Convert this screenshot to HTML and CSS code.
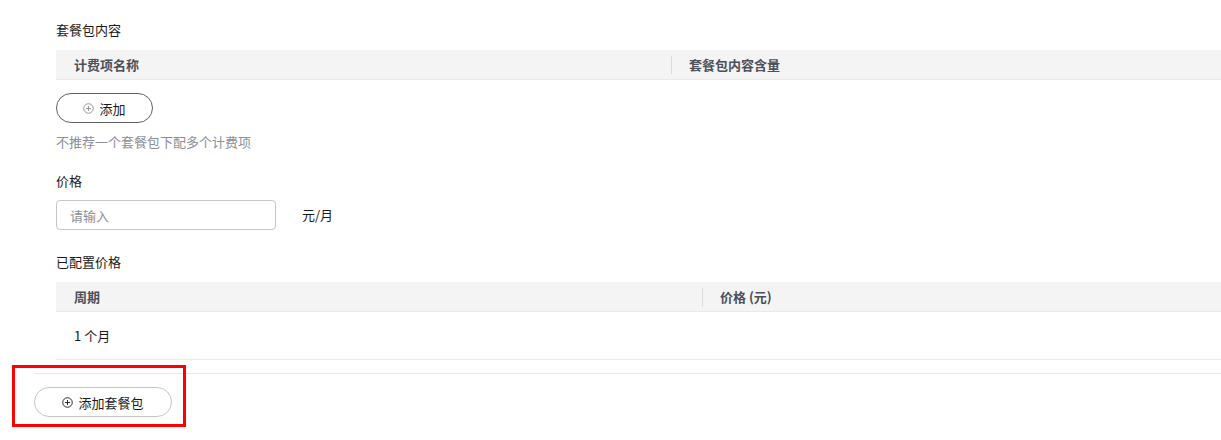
FILE: index.html
```html
<!DOCTYPE html>
<html lang="zh-CN">
<head>
  <meta charset="UTF-8">
  <title>套餐包</title>
  <link rel="stylesheet" href="styles.css">
</head>
<body>
  <div class="form">
    <div class="label">套餐包内容</div>
    <div class="grid grid-items">
      <div class="grid-head">
        <div class="cell">计费项名称</div>
        <div class="cell sep">套餐包内容含量</div>
      </div>
    </div>
    <button class="btn btn-dark">
      <svg class="plus" viewBox="0 0 12 12"><circle cx="6" cy="6" r="5.2"/><path d="M6 3.2v5.6M3.2 6h5.6"/></svg>
      添加
    </button>
    <div class="hint">不推荐一个套餐包下配多个计费项</div>

    <div class="label label-gap">价格</div>
    <div class="price-row">
      <input class="input" type="text" placeholder="请输入">
      <span class="unit">元/月</span>
    </div>

    <div class="label label-gap2">已配置价格</div>
    <div class="grid grid-prices">
      <div class="grid-head">
        <div class="cell">周期</div>
        <div class="cell sep">价格 (元)</div>
      </div>
      <div class="grid-row">
        <div class="cell">1 个月</div>
        <div class="cell"></div>
      </div>
    </div>
  </div>

  <div class="footer">
    <div class="mark">
      <button class="btn btn-light">
        <svg class="plus" viewBox="0 0 12 12"><circle cx="6" cy="6" r="5.2"/><path d="M6 3.2v5.6M3.2 6h5.6"/></svg>
        添加套餐包
      </button>
    </div>
  </div>
</body>
</html>
```

FILE: styles.css
```css
body {
  margin: 0;
  background: #fff;
  color: #191919;
  font-family: "Noto Sans CJK SC", "Noto Sans", sans-serif;
  font-size: 13px;
  line-height: 18px;
}
.form {
  padding: 21px 0 0 56px;
}
.label {
  margin-bottom: 11px;
}
.label-gap {
  margin-top: 21px;
  margin-bottom: 10px;
}
.label-gap2 {
  margin-top: 23px;
}
.grid-head,
.grid-row {
  display: grid;
  align-items: center;
  box-sizing: border-box;
}
.grid-items .grid-head,
.grid-items .grid-row {
  grid-template-columns: 615px 1fr;
}
.grid-prices .grid-head,
.grid-prices .grid-row {
  grid-template-columns: 646px 1fr;
}
.grid-head {
  height: 30px;
  background: #f4f4f4;
  border-bottom: 1px solid #e9e9e9;
  font-weight: bold;
  color: #4a4f5a;
}
.grid-row {
  height: 48px;
  border-bottom: 1px solid #ebebeb;
}
.cell {
  padding-left: 18px;
  position: relative;
}
.cell.sep::before {
  content: "";
  position: absolute;
  left: 0;
  top: 0;
  height: 18px;
  border-left: 1px solid #dadada;
}
.btn {
  display: inline-flex;
  align-items: center;
  justify-content: center;
  gap: 5px;
  height: 30px;
  box-sizing: border-box;
  border-radius: 15px;
  background: #fff;
  font-family: inherit;
  font-size: 13px;
  color: #191919;
  cursor: pointer;
  padding: 0;
}
.btn-dark {
  width: 97px;
  margin-top: 13px;
  border: 1px solid #5e6167;
}
.btn-dark .plus {
  stroke: #8a8e99;
}
.btn-light {
  width: 138px;
  border: 1px solid #c4c4c4;
}
.btn-light .plus {
  stroke: #191919;
}
.plus {
  width: 11px;
  height: 11px;
  fill: none;
  stroke-width: 1;
}
.hint {
  margin-top: 10px;
  color: #8a8e99;
}
.price-row {
  display: flex;
  align-items: center;
  gap: 26px;
}
.input {
  width: 220px;
  height: 30px;
  box-sizing: border-box;
  border: 1px solid #c6c6c6;
  border-radius: 4px;
  padding: 0 13px;
  font-family: inherit;
  font-size: 13px;
  color: #191919;
  outline: none;
}
.input::placeholder {
  color: #8a8e99;
}
.footer {
  margin: 13px 0 0 34px;
  border-top: 1px solid #e8e8e8;
  padding: 13px 0 22px;
  position: relative;
}
.mark {
  display: inline-block;
}
.mark::after {
  content: "";
  position: absolute;
  left: -22px;
  top: -9px;
  width: 174px;
  height: 62px;
  box-sizing: border-box;
  border: 3px solid #f00;
  pointer-events: none;
}
```
